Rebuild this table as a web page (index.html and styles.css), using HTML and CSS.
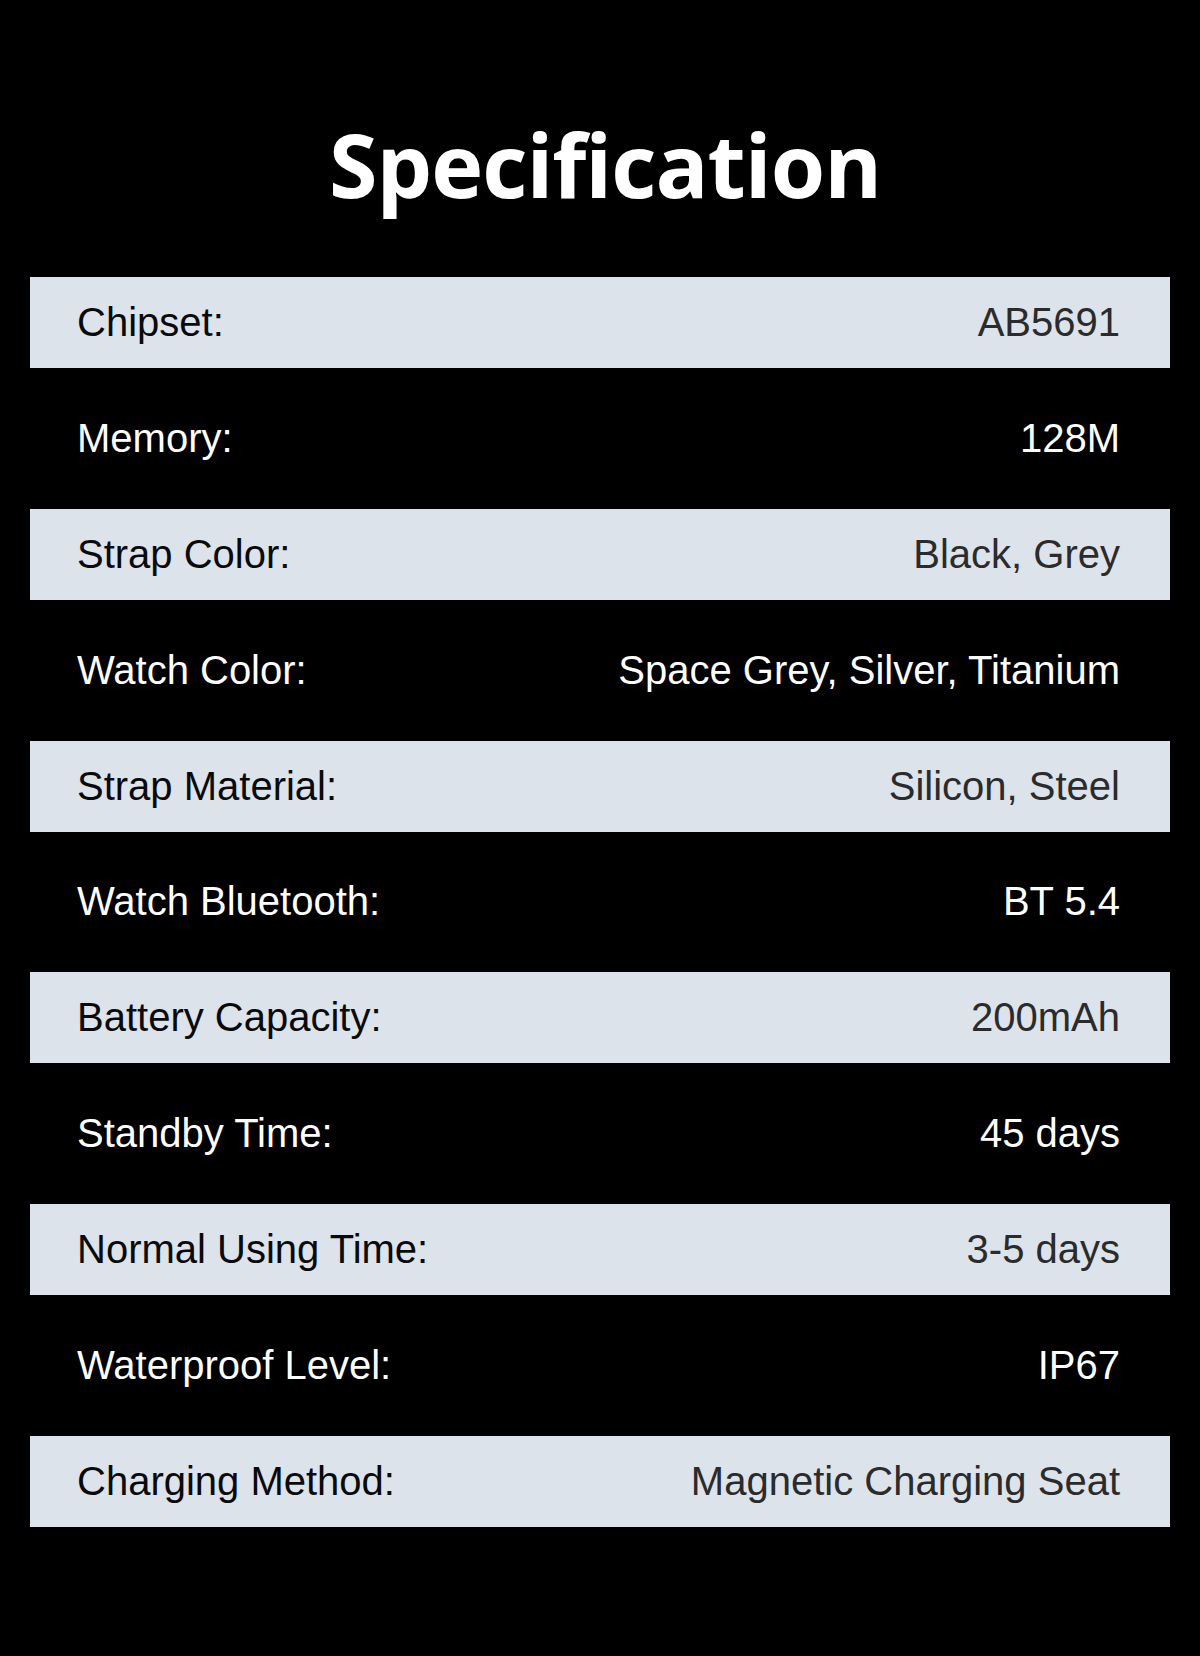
FILE: index.html
```html
<!DOCTYPE html>
<html lang="en">
<head>
<meta charset="utf-8">
<title>Specification</title>
<link rel="stylesheet" href="styles.css">
</head>
<body>
<main class="page">
  <h1 class="title">Specification</h1>
  <div class="specs">
    <div class="row light"><span class="label">Chipset:</span><span class="value">AB5691</span></div>
    <div class="row dark"><span class="label">Memory:</span><span class="value">128M</span></div>
    <div class="row light"><span class="label">Strap Color:</span><span class="value">Black, Grey</span></div>
    <div class="row dark"><span class="label">Watch Color:</span><span class="value">Space Grey, Silver, Titanium</span></div>
    <div class="row light"><span class="label">Strap Material:</span><span class="value">Silicon, Steel</span></div>
    <div class="row dark"><span class="label">Watch Bluetooth:</span><span class="value">BT 5.4</span></div>
    <div class="row light"><span class="label">Battery Capacity:</span><span class="value">200mAh</span></div>
    <div class="row dark"><span class="label">Standby Time:</span><span class="value">45 days</span></div>
    <div class="row light"><span class="label">Normal Using Time:</span><span class="value">3-5 days</span></div>
    <div class="row dark"><span class="label">Waterproof Level:</span><span class="value">IP67</span></div>
    <div class="row light"><span class="label">Charging Method:</span><span class="value">Magnetic Charging Seat</span></div>
  </div>
</main>
</body>
</html>
```

FILE: styles.css
```css
html, body {
  margin: 0;
  padding: 0;
  background: #000;
}

.page {
  width: 1200px;
  height: 1656px;
  box-sizing: border-box;
  padding: 120px 30px 0;
  background: #000;
}

.title {
  margin: 0 0 69px;
  padding-left: 10px;
  font-family: "Open Sans", "Noto Sans", sans-serif;
  font-weight: 700;
  font-size: 88px;
  line-height: 88px;
  letter-spacing: -1px;
  color: #fff;
  text-align: center;
}

.specs {
  display: flex;
  flex-direction: column;
  gap: 24.9px;
}

.row {
  height: 91px;
  display: flex;
  align-items: center;
  justify-content: space-between;
  padding: 0 50px 0 47px;
  font-family: "Liberation Sans", Arial, sans-serif;
  font-size: 40px;
}

.row.light {
  background: #dce3eb;
}

.row.light .label {
  color: #0a0a0a;
}

.row.light .value {
  color: #2b2b2b;
}

.row.dark .label,
.row.dark .value {
  color: #fff;
}
```
